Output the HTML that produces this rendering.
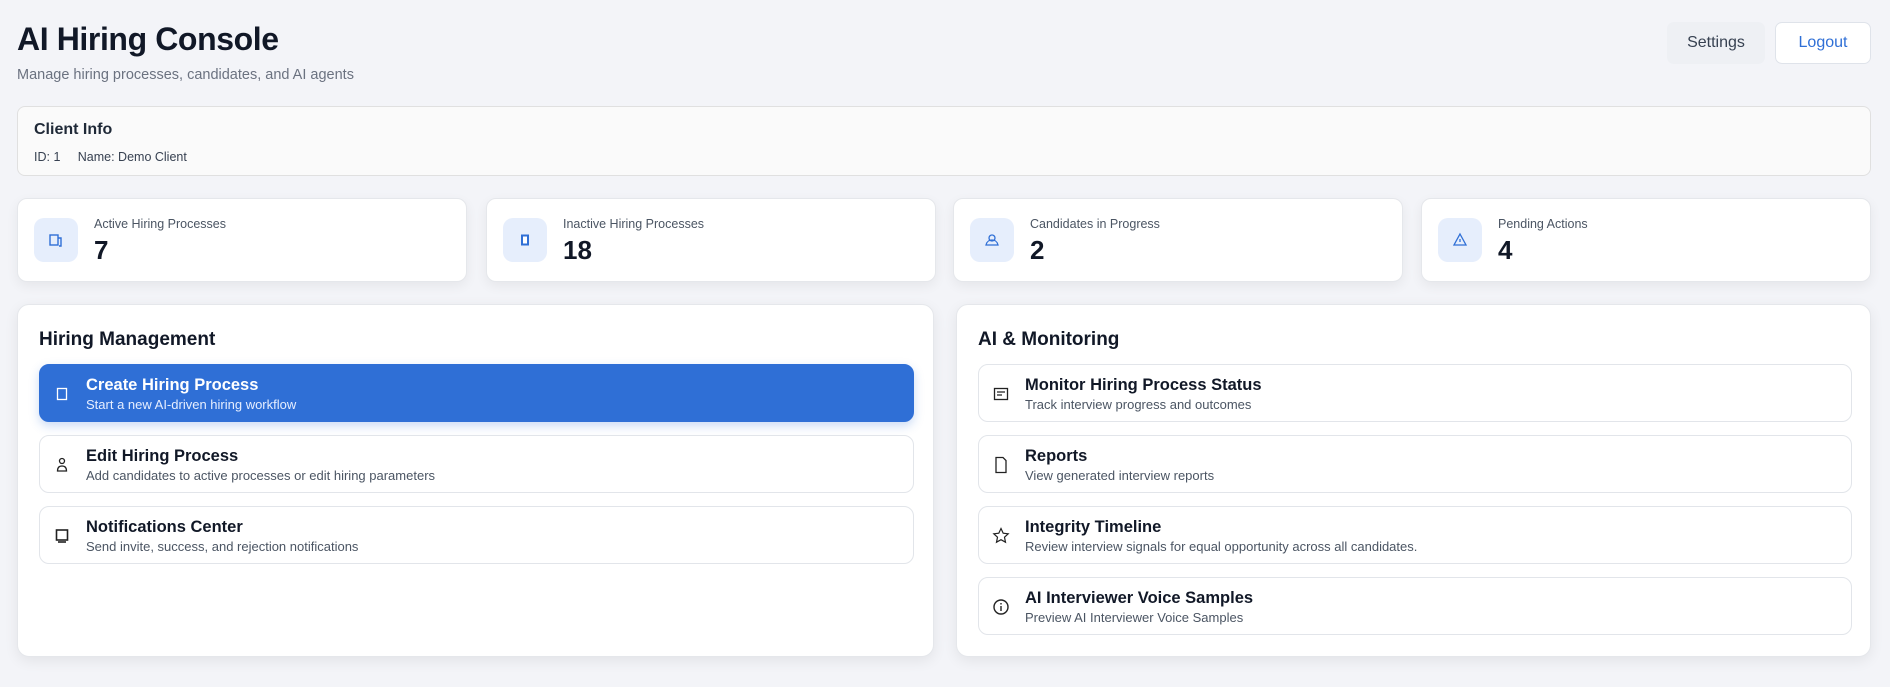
<!DOCTYPE html>
<html><head><meta charset="utf-8"><style>
*{box-sizing:border-box;margin:0;padding:0}
body{width:1890px;height:687px;background:#f3f4f8;font-family:"Liberation Sans",sans-serif;color:#111827;position:relative;overflow:hidden}
.abs{position:absolute}
h1{position:absolute;left:17px;top:21px;font-size:32px;font-weight:700;color:#111827;letter-spacing:-0.4px}
.sub{left:17px;top:67px;font-size:14.5px;color:#6b7280}
.btn{top:22px;height:42px;border-radius:7px;font-size:16px;display:flex;align-items:center;justify-content:center}
.client{left:17px;top:106px;width:1854px;height:70px;background:#fafafa;border:1px solid #e0e0e0;border-radius:8px}
.client .t{position:absolute;left:16px;top:14px;font-size:16px;font-weight:600;color:#1f2937}
.client .d{position:absolute;left:16px;top:43px;font-size:12.5px;color:#374151}
.stat{top:198px;height:84px;width:450px;background:#fff;border:1px solid #e5e7eb;border-radius:10px;box-shadow:0 4px 12px rgba(0,0,0,.06)}
.ib{position:absolute;left:16px;top:19px;width:44px;height:44px;border-radius:10px;background:#e6eefc;display:flex;align-items:center;justify-content:center}
.stat .l{position:absolute;left:76px;top:18px;font-size:12.5px;color:#4b5563}
.stat .n{position:absolute;left:76px;top:36px;font-size:26px;font-weight:700;color:#111827}
.panel{top:304px;height:353px;background:#fff;border:1px solid #e5e7eb;border-radius:12px;box-shadow:0 4px 14px rgba(0,0,0,.07)}
.panel h2{position:absolute;left:21px;top:24px;font-size:19px;font-weight:700;color:#111827}
.item{position:absolute;left:21px;height:58px;border:1px solid #e2e5ea;border-radius:10px;background:#fff}
.item .ic{position:absolute;left:12px;top:19px;width:20px;height:20px;display:flex;align-items:center;justify-content:center}
.item .tt{position:absolute;left:46px;top:11px;font-size:16.5px;font-weight:700;color:#111827}
.item .dd{position:absolute;left:46px;top:32px;font-size:13px;color:#4b5563}
.item.on{background:#2f6fd6;border-color:#2f6fd6;box-shadow:0 4px 10px rgba(47,111,214,.25)}
.item.on .tt{color:#fff}
.item.on .dd{color:#e6eeff}
</style></head><body>
<h1>AI Hiring Console</h1>
<div class="abs sub">Manage hiring processes, candidates, and AI agents</div>
<div class="abs btn" style="left:1667px;width:98px;background:#eef0f4;color:#374151">Settings</div>
<div class="abs btn" style="left:1775px;width:96px;background:#fff;border:1px solid #dfe3ea;color:#2f6fd6">Logout</div>

<div class="abs client"><div class="t">Client Info</div><div class="d">ID: 1&nbsp;&nbsp;&nbsp;&nbsp;&nbsp;Name: Demo Client</div></div>

<div class="abs stat" style="left:17px"><div class="ib"><svg width="16" height="16" viewBox="0 0 16 16" fill="none" stroke="#2f6fd6" stroke-width="1.4"><rect x="2" y="3" width="8" height="10"/><path d="M10 6h3v8h-2"/></svg></div><div class="l">Active Hiring Processes</div><div class="n">7</div></div>
<div class="abs stat" style="left:486px"><div class="ib"><svg width="16" height="16" viewBox="0 0 16 16"><rect x="4" y="2.5" width="8" height="11" fill="#2f6fd6"/><rect x="6" y="4.5" width="4" height="7" fill="#fff"/></svg></div><div class="l">Inactive Hiring Processes</div><div class="n">18</div></div>
<div class="abs stat" style="left:953px"><div class="ib"><svg width="18" height="16" viewBox="0 0 18 16" fill="none" stroke="#2f6fd6" stroke-width="1.3"><circle cx="9" cy="6" r="3"/><path d="M3 13c1-4 3-5 6-5s5 1 6 5z"/></svg></div><div class="l">Candidates in Progress</div><div class="n">2</div></div>
<div class="abs stat" style="left:1421px"><div class="ib"><svg width="16" height="16" viewBox="0 0 16 16" fill="none" stroke="#2f6fd6" stroke-width="1.3"><path d="M8 2L14 13H2z"/><path d="M8 7v3"/></svg></div><div class="l">Pending Actions</div><div class="n">4</div></div>

<div class="abs panel" style="left:17px;width:917px"><h2>Hiring Management</h2>
<div class="item on" style="top:59px;width:875px"><div class="ic"><svg width="12" height="14"><rect x="1.5" y="1.5" width="9" height="11" fill="none" stroke="#fff" stroke-width="1.3"/></svg></div><div class="tt">Create Hiring Process</div><div class="dd">Start a new AI-driven hiring workflow</div></div>
<div class="item" style="top:130px;width:875px"><div class="ic"><svg width="12" height="16" fill="none" stroke="#222" stroke-width="1.3"><circle cx="6" cy="4" r="2.5"/><path d="M1.5 14c0-4 2-5 4.5-5s4.5 1 4.5 5z"/></svg></div><div class="tt">Edit Hiring Process</div><div class="dd">Add candidates to active processes or edit hiring parameters</div></div>
<div class="item" style="top:201px;width:875px"><div class="ic"><svg width="16" height="16" fill="none" stroke="#222" stroke-width="1.6"><rect x="2.5" y="2" width="11" height="10"/><path d="M4 14h8"/></svg></div><div class="tt">Notifications Center</div><div class="dd">Send invite, success, and rejection notifications</div></div>
</div>

<div class="abs panel" style="left:956px;width:915px"><h2>AI &amp; Monitoring</h2>
<div class="item" style="top:59px;width:874px"><div class="ic"><svg width="16" height="16" fill="none" stroke="#222" stroke-width="1.3"><rect x="1.5" y="2.5" width="13" height="11"/><path d="M4 6h8M4 9h5"/></svg></div><div class="tt">Monitor Hiring Process Status</div><div class="dd">Track interview progress and outcomes</div></div>
<div class="item" style="top:130px;width:874px"><div class="ic"><svg width="14" height="18" fill="none" stroke="#222" stroke-width="1.3"><path d="M2 1.5h7l3 3V16.5H2z"/></svg></div><div class="tt">Reports</div><div class="dd">View generated interview reports</div></div>
<div class="item" style="top:201px;width:874px"><div class="ic"><svg width="18" height="18" fill="none" stroke="#222" stroke-width="1.2"><path d="M9 1.5l2.2 4.7 5 .6-3.7 3.4 1 5-4.5-2.5-4.5 2.5 1-5L1.8 6.8l5-.6z"/></svg></div><div class="tt">Integrity Timeline</div><div class="dd">Review interview signals for equal opportunity across all candidates.</div></div>
<div class="item" style="top:272px;width:874px"><div class="ic"><svg width="18" height="18" fill="none" stroke="#222" stroke-width="1.4"><circle cx="9" cy="9" r="7"/><path d="M9 8v5M9 5v1.5"/></svg></div><div class="tt">AI Interviewer Voice Samples</div><div class="dd">Preview AI Interviewer Voice Samples</div></div>
</div>
</body></html>
